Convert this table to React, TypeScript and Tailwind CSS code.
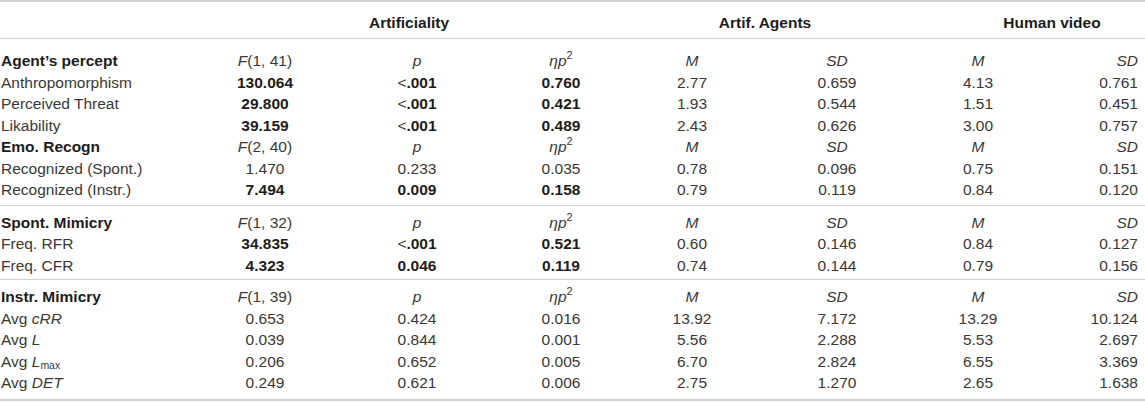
import React from "react";

const COLS = "grid grid-cols-[198px_134px_170px_118px_144px_146px_136px_99px]";

type Cell = React.ReactNode;

function Row({ cells, className = "" }: { cells: Cell[]; className?: string }) {
  return (
    <div className={`${COLS} leading-[21.5px] ${className}`}>
      {cells.map((c, i) => (
        <div
          key={i}
          className={
            i === 0
              ? "pl-[1px] text-left whitespace-nowrap"
              : i === 7
              ? "pr-[7px] text-right whitespace-nowrap"
              : "text-center whitespace-nowrap"
          }
        >
          {c}
        </div>
      ))}
    </div>
  );
}

const B = ({ children }: { children: React.ReactNode }) => (
  <span className="font-bold text-[#1c1c1c]">{children}</span>
);
const I = ({ children }: { children: React.ReactNode }) => <span className="italic">{children}</span>;

const Eta = () => (
  <span>
    <span className="italic">ηp</span>
    <span className="text-[11px] relative top-[-7px] leading-none">2</span>
  </span>
);

const Lt = () => (
  <span>
    {"<"}
    <B>.001</B>
  </span>
);

function SubHead({ label, f }: { label: string; f: string }) {
  return (
    <Row
      cells={[
        <B>{label}</B>,
        <span>
          <I>F</I>
          {f}
        </span>,
        <I>p</I>,
        <Eta />,
        <I>M</I>,
        <I>SD</I>,
        <I>M</I>,
        <I>SD</I>,
      ]}
    />
  );
}

export default function App() {
  return (
    <div
      className="w-[1145px] h-[402px] bg-white text-[15.5px] text-[#383838] overflow-hidden"
      style={{ fontFamily: '"Liberation Sans", Arial, sans-serif' }}
    >
      <div className="border-t-2 border-[#cfcfcf]" />
      <div className={`${COLS} h-[37px] items-center pt-[5px] border-b border-[#cfcfcf] font-bold text-[#1c1c1c]`}>
        <div />
        <div className="col-span-3 text-center">Artificiality</div>
        <div className="col-span-2 text-center">Artif. Agents</div>
        <div className="col-span-2 text-center pl-[49px]">Human video</div>
      </div>

      <div className="pt-[11px] pb-[4px] border-b border-[#cfcfcf]">
        <SubHead label="Agent’s percept" f="(1, 41)" />
        <Row cells={["Anthropomorphism", <B>130.064</B>, <Lt />, <B>0.760</B>, "2.77", "0.659", "4.13", "0.761"]} />
        <Row cells={["Perceived Threat", <B>29.800</B>, <Lt />, <B>0.421</B>, "1.93", "0.544", "1.51", "0.451"]} />
        <Row cells={["Likability", <B>39.159</B>, <Lt />, <B>0.489</B>, "2.43", "0.626", "3.00", "0.757"]} />
        <SubHead label="Emo. Recogn" f="(2, 40)" />
        <Row cells={["Recognized (Spont.)", "1.470", "0.233", "0.035", "0.78", "0.096", "0.75", "0.151"]} />
        <Row cells={["Recognized (Instr.)", <B>7.494</B>, <B>0.009</B>, <B>0.158</B>, "0.79", "0.119", "0.84", "0.120"]} />
      </div>

      <div className="pt-[6px] pb-[3px] border-b border-[#cfcfcf]">
        <SubHead label="Spont. Mimicry" f="(1, 32)" />
        <Row cells={["Freq. RFR", <B>34.835</B>, <Lt />, <B>0.521</B>, "0.60", "0.146", "0.84", "0.127"]} />
        <Row cells={["Freq. CFR", <B>4.323</B>, <B>0.046</B>, <B>0.119</B>, "0.74", "0.144", "0.79", "0.156"]} />
      </div>

      <div className="pt-[6px] pb-[5px] border-b-2 border-[#cfcfcf]">
        <SubHead label="Instr. Mimicry" f="(1, 39)" />
        <Row
          cells={[
            <span>
              Avg <I>cRR</I>
            </span>,
            "0.653",
            "0.424",
            "0.016",
            "13.92",
            "7.172",
            "13.29",
            "10.124",
          ]}
        />
        <Row
          cells={[
            <span>
              Avg <I>L</I>
            </span>,
            "0.039",
            "0.844",
            "0.001",
            "5.56",
            "2.288",
            "5.53",
            "2.697",
          ]}
        />
        <Row
          cells={[
            <span>
              Avg <I>L</I>
              <span className="text-[10.5px] relative top-[2px] leading-none">max</span>
            </span>,
            "0.206",
            "0.652",
            "0.005",
            "6.70",
            "2.824",
            "6.55",
            "3.369",
          ]}
        />
        <Row
          cells={[
            <span>
              Avg <I>DET</I>
            </span>,
            "0.249",
            "0.621",
            "0.006",
            "2.75",
            "1.270",
            "2.65",
            "1.638",
          ]}
        />
      </div>
    </div>
  );
}
